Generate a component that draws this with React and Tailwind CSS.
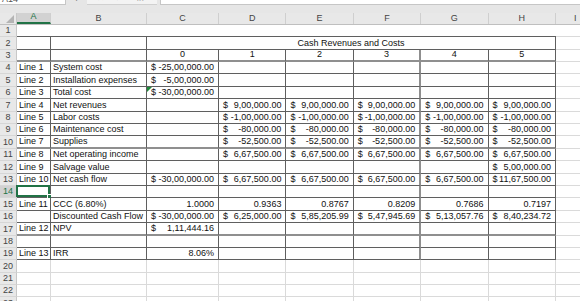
import React from "react";

const W = ["w-[34px]", "w-[96px]", "w-[72px]", "w-[67.4px]", "w-[67.4px]", "w-[67.4px]", "w-[67.4px]", "w-[67.4px]"];
const COLS = ["A", "B", "C", "D", "E", "F", "G", "H"];

const acc = (v) => ({ acc: v });
const r = (v) => ({ r: v });
const c = (v) => ({ c: v });

const rowsData = {
  3: [null, null, c("0"), c("1"), c("2"), c("3"), c("4"), c("5")],
  4: ["Line 1", "System cost", acc("-25,00,000.00")],
  5: ["Line 2", "Installation expenses", acc("-5,00,000.00")],
  6: ["Line 3", "Total cost", { acc: "-30,00,000.00", tri: true }],
  7: ["Line 4", "Net revenues", null, acc("9,00,000.00"), acc("9,00,000.00"), acc("9,00,000.00"), acc("9,00,000.00"), acc("9,00,000.00")],
  8: ["Line 5", "Labor costs", null, acc("-1,00,000.00"), acc("-1,00,000.00"), acc("-1,00,000.00"), acc("-1,00,000.00"), acc("-1,00,000.00")],
  9: ["Line 6", "Maintenance cost", null, acc("-80,000.00"), acc("-80,000.00"), acc("-80,000.00"), acc("-80,000.00"), acc("-80,000.00")],
  10: ["Line 7", "Supplies", null, acc("-52,500.00"), acc("-52,500.00"), acc("-52,500.00"), acc("-52,500.00"), acc("-52,500.00")],
  11: ["Line 8", "Net operating income", null, acc("6,67,500.00"), acc("6,67,500.00"), acc("6,67,500.00"), acc("6,67,500.00"), acc("6,67,500.00")],
  12: ["Line 9", "Salvage value", null, null, null, null, null, acc("5,00,000.00")],
  13: ["Line 10", "Net cash flow", acc("-30,00,000.00"), acc("6,67,500.00"), acc("6,67,500.00"), acc("6,67,500.00"), acc("6,67,500.00"), acc("11,67,500.00")],
  14: [],
  15: ["Line 11", "CCC (6.80%)", r("1.0000"), r("0.9363"), r("0.8767"), r("0.8209"), r("0.7686"), r("0.7197")],
  16: [null, "Discounted Cash Flow", acc("-30,00,000.00"), acc("6,25,000.00"), acc("5,85,205.99"), acc("5,47,945.69"), acc("5,13,057.76"), acc("8,40,234.72")],
  17: ["Line 12", "NPV", acc("1,11,444.16")],
  18: [],
  19: ["Line 13", "IRR", r("8.06%")],
};

const THICK_ROWS = [3, 10, 17];

function RowHeader({ n, selected }) {
  return (
    <div
      className={
        "w-[17px] shrink-0 flex items-end justify-center border-r border-r-[#c8c8c8] border-b border-b-[#d6d6d6] leading-[11px] text-[9px] " +
        (selected ? "bg-[#d2d2d2] text-[#217346]" : "bg-[#e8e8e8] text-[#444]")
      }
    >
      {n}
    </div>
  );
}

function CellContent({ v }) {
  if (v == null) return null;
  if (typeof v === "string") return <span className="pl-[2px] whitespace-nowrap">{v}</span>;
  if (v.acc)
    return (
      <div className="flex w-full justify-between pl-[4px] pr-[4px] whitespace-nowrap">
        <span>$</span>
        <span>{v.acc}</span>
      </div>
    );
  if (v.r) return <div className="w-full text-right pr-[4px] whitespace-nowrap">{v.r}</div>;
  if (v.c) return <div className="w-full text-center">{v.c}</div>;
  return null;
}

function DataRow({ n }) {
  const data = rowsData[n] || [];
  const thick = THICK_ROWS.includes(n);
  const selectedRow = n === 14;
  return (
    <div className="flex h-[12.4px]">
      <RowHeader n={n} selected={selectedRow} />
      {COLS.map((col, i) => {
        const v = data[i];
        const thickR = col === "F";
        return (
          <div
            key={col}
            className={
              "relative shrink-0 flex items-end leading-[11px] " +
              W[i] +
              " " +
              (thick ? "border-b-2 border-b-[#8f8f8f] " : "border-b border-b-[#5f5f5f] ") +
              (thickR ? "border-r-2 border-r-[#8f8f8f]" : "border-r border-r-[#5f5f5f]")
            }
          >
            <CellContent v={v} />
            {v && v.tri && (
              <div className="absolute left-0 top-0 w-0 h-0 border-t-[5px] border-t-[#1f8a3b] border-r-[5px] border-r-transparent" />
            )}
            {selectedRow && i === 0 && (
              <div className="absolute -left-[1px] -top-[1px] right-0 bottom-0 border-2 border-[#217346]">
                <div className="absolute -right-[4px] -bottom-[4px] w-[5px] h-[5px] bg-[#217346] border border-white" />
              </div>
            )}
          </div>
        );
      })}
      <div className="flex-1 border-b border-b-[#dadada]" />
    </div>
  );
}

function EmptyRow({ n }) {
  return (
    <div className="flex h-[12.4px]">
      <RowHeader n={n} />
      {COLS.map((col, i) => (
        <div key={col} className={"shrink-0 border-b border-b-[#dadada] border-r border-r-[#dadada] " + W[i]} />
      ))}
      <div className="flex-1 border-b border-b-[#dadada]" />
    </div>
  );
}

export default function App() {
  const dataRows = [];
  for (let n = 3; n <= 19; n++) dataRows.push(<DataRow key={n} n={n} />);
  return (
    <div
      className="w-[580px] h-[301px] overflow-hidden bg-white text-[9px] text-[#111]"
      style={{ fontFamily: '"Liberation Sans", Arial, sans-serif' }}
    >
      {/* formula bar remnant */}
      <div className="h-[12.5px] bg-[#e6e6e6] relative">
        <div className="flex h-[4.5px]">
          <div className="w-[66px] bg-white border-b border-r border-[#c6c6c6] overflow-hidden">
            <div className="-mt-[7px] pl-[2px] text-[9px] text-[#555]">A14</div>
          </div>
          <div className="w-[21px] flex justify-center overflow-hidden">
            <div className="-mt-[8px] text-[#888]">⋮</div>
          </div>
          <div className="w-[70px] bg-[#f3f3f3] border-b border-[#d0d0d0] flex overflow-hidden text-[#aaa]">
            <div className="-mt-[8px] pl-[10px] w-[22px]">✕</div>
            <div className="-mt-[8px] pl-[6px] w-[22px]">✓</div>
            <div className="-mt-[8px] pl-[6px] italic">fx</div>
          </div>
          <div className="w-[3px]" />
          <div className="flex-1 bg-white border-b border-l border-[#c6c6c6]" />
        </div>
      </div>

      {/* column header */}
      <div className="flex h-[12.4px] bg-[#e8e8e8] border-b border-b-[#bfbfbf]">
        <div className="w-[17px] shrink-0 relative border-r border-r-[#c8c8c8]">
          <div className="absolute right-[2px] bottom-[1px] w-0 h-0 border-b-[8px] border-b-[#b4b4b4] border-l-[8px] border-l-transparent" />
        </div>
        {COLS.map((col, i) => (
          <div
            key={col}
            className={
              "shrink-0 flex items-end justify-center leading-[11px] border-r border-r-[#cfcfcf] " +
              W[i] +
              (col === "A" ? " bg-[#d2d2d2] text-[#217346] border-b-2 border-b-[#217346]" : " text-[#444]")
            }
          >
            {col}
          </div>
        ))}
        <div className="flex-1 flex items-end justify-start leading-[11px] text-[#444] pl-[18px]">I</div>
      </div>

      {/* row 1 */}
      <div className="flex h-[12.4px]">
        <RowHeader n={1} />
        <div className="w-[539px] shrink-0 border-b border-b-[#5f5f5f]" />
        <div className="flex-1 border-b border-b-[#dadada]" />
      </div>

      {/* row 2 */}
      <div className="flex h-[12.4px]">
        <RowHeader n={2} />
        <div className="w-[34px] shrink-0 border-b border-b-[#5f5f5f] border-r border-r-[#5f5f5f]" />
        <div className="w-[96px] shrink-0 border-b border-b-[#5f5f5f] border-r border-r-[#5f5f5f]" />
        <div className="w-[409px] shrink-0 flex items-end justify-center leading-[11px] border-b border-b-[#5f5f5f] border-r border-r-[#5f5f5f]">
          Cash Revenues and Costs
        </div>
        <div className="flex-1 border-b border-b-[#dadada]" />
      </div>

      {dataRows}

      {[20, 21, 22, 23].map((n) => (
        <EmptyRow key={n} n={n} />
      ))}
    </div>
  );
}
